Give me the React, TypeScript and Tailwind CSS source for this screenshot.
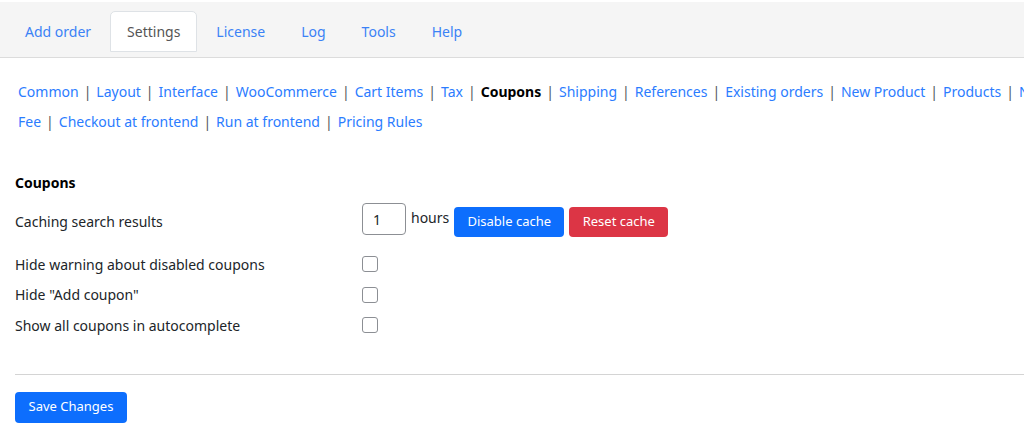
const tabs = ["Add order", "Settings", "License", "Log", "Tools", "Help"];

const row1 = ["Common", "Layout", "Interface", "WooCommerce", "Cart Items", "Tax", "Coupons", "Shipping", "References", "Existing orders", "New Product", "Products", "New Customer"];
const row2 = ["Fee", "Checkout at frontend", "Run at frontend", "Pricing Rules"];

function SubNav({ items }: { items: string[] }) {
    return (
        <div className="flex items-center whitespace-nowrap h-[30px]">
            {items.map((item, i) => (
                <span key={item} className="flex items-center">
                    {i > 0 && <span className="mx-[5px] text-[#50575e]">|</span>}
                    <a href="#" className={item === "Coupons" ? "font-bold text-black" : "text-[#2b7cff]"}>{item}</a>
                </span>
            ))}
        </div>
    );
}

export default function App() {
    return (
        <div className="w-[1024px] h-[444px] overflow-hidden bg-white text-[14px] text-[#212529]" style={{ fontFamily: '"Noto Sans", sans-serif' }}>
            <div className="mt-[2px] h-[56px] bg-[#f5f5f5] border-b border-[#dcdcdc] pl-[8px] pt-[9px]">
                <ul className="flex gap-[2px]">
                    {tabs.map(tab => (
                        <li key={tab}
                            className={tab === "Settings"
                                ? "h-[41px] px-[16px] flex items-center bg-white border border-[#dee2e6] rounded-t-[5px] text-[#555]"
                                : "h-[41px] px-[16px] flex items-center border border-transparent text-[#3b82f6]"}
                        >
                            {tab}
                        </li>
                    ))}
                </ul>
            </div>

            <div className="pl-[18px] pt-[18px]">
                <SubNav items={row1} />
                <SubNav items={row2} />
            </div>

            <div className="px-[15px] pt-[37px]">
                <h3 className="font-bold h-[20px] leading-[20px] text-black">Coupons</h3>

                <table className="mt-[7px]">
                    <tbody>
                        <tr className="h-[49px]">
                            <th className="w-[347px] text-left font-normal align-top pt-[12px] leading-[20px]">Caching search results</th>
                            <td className="align-top pt-[3px]">
                                <div className="flex items-start">
                                    <input type="text" defaultValue="1"
                                        className="w-[44px] h-[32px] border border-[#8c8f94] rounded-[4px] px-[10px] text-[14px]" />
                                    <span className="ml-[5px] mt-[5px] leading-[20px]">hours</span>
                                    <button className="ml-[5px] mt-[4px] h-[30px] w-[110px] rounded-[4px] bg-[#0d6efd] text-white text-[13px]">Disable cache</button>
                                    <button className="ml-[5px] mt-[4px] h-[30px] w-[99px] rounded-[4px] bg-[#dc3545] text-white text-[13px]">Reset cache</button>
                                </div>
                            </td>
                        </tr>
                        {["Hide warning about disabled coupons", 'Hide "Add coupon"', "Show all coupons in autocomplete"].map(label => (
                            <tr key={label} className="h-[30.5px]">
                                <th className="text-left font-normal">{label}</th>
                                <td>
                                    <div className="w-[16px] h-[16px] border border-[#8c8f94] rounded-[3px] bg-white" />
                                </td>
                            </tr>
                        ))}
                    </tbody>
                </table>

                <hr className="mt-[33px] border-[#d4d4d4] mr-[-15px]" />

                <button className="mt-[17px] h-[31px] w-[112px] rounded-[4px] bg-[#0d6efd] text-white text-[13px]">Save Changes</button>
            </div>
        </div>
    );
}
